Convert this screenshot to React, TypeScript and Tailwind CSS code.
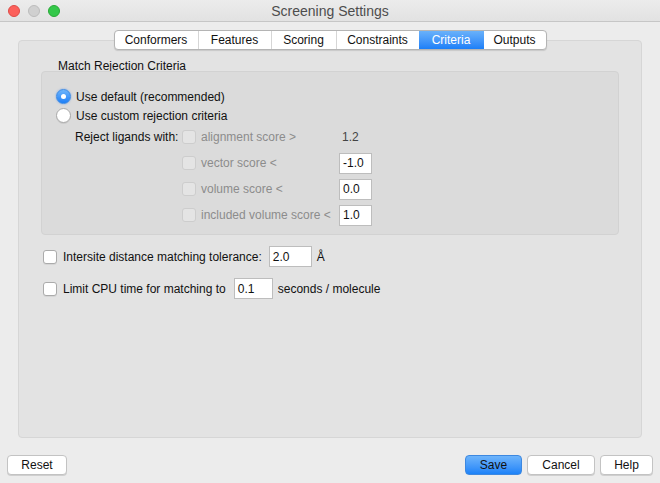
import React from 'react'

const TABS = [
  { label: 'Conformers', w: 'w-[83px]' },
  { label: 'Features', w: 'w-[73px]' },
  { label: 'Scoring', w: 'w-[65px]' },
  { label: 'Constraints', w: 'w-[83px]' },
  { label: 'Criteria', w: 'w-[65px]', active: true },
  { label: 'Outputs', w: 'w-[62px]' },
]

const CRITERIA = [
  { label: 'alignment score >', value: '1.2', plain: true },
  { label: 'vector score <', value: '-1.0' },
  { label: 'volume score <', value: '0.0' },
  { label: 'included volume score <', value: '1.0' },
]

function Radio({ on }: { on?: boolean }) {
  return on ? (
    <span className="w-[15px] h-[15px] rounded-full bg-gradient-to-b from-[#6cb4fb] to-[#1a7ff7] border border-[#3a8ae6] flex items-center justify-center shadow-[0_0_2px_rgba(40,120,240,0.6)]">
      <span className="w-[5px] h-[5px] rounded-full bg-white" />
    </span>
  ) : (
    <span className="w-[15px] h-[15px] rounded-full bg-white border border-[#a9a9a9] shadow-[0_1px_0_rgba(0,0,0,0.08)]" />
  )
}

function Check({ disabled }: { disabled?: boolean }) {
  return disabled ? (
    <span className="w-[14px] h-[14px] rounded-[3px] bg-[#e4e4e4] border border-[#cdcdcd] shrink-0" />
  ) : (
    <span className="w-[14px] h-[14px] rounded-[3px] bg-white border border-[#ababab] shadow-[0_1px_0_rgba(0,0,0,0.06)] shrink-0" />
  )
}

function Field({ value, w }: { value: string; w: string }) {
  return (
    <div className={`${w} h-[21px] bg-white border border-[#bdbdbd] flex items-center pl-[3px] text-[#111]`}>
      {value}
    </div>
  )
}

function Button({ label, w, primary }: { label: string; w: string; primary?: boolean }) {
  return (
    <div
      className={`${w} h-[20px] rounded-[4px] flex items-center justify-center text-[#111] ${
        primary
          ? 'bg-gradient-to-b from-[#6db4fb] to-[#1b82f8] border border-[#3d88e0]'
          : 'bg-white border border-[#c3c3c3] shadow-[0_1px_0_rgba(0,0,0,0.12)]'
      }`}
    >
      {label}
    </div>
  )
}

export default function App() {
  return (
    <div className="w-[660px] h-[483px] bg-[#ececec] flex flex-col overflow-hidden text-[12px] leading-none text-[#111] font-['Liberation_Sans',Arial,sans-serif]">
      {/* Title bar */}
      <div className="h-[22px] shrink-0 border-b border-[#c6c6c6] bg-gradient-to-b from-[#ececec] to-[#e2e2e2] relative flex items-center justify-center">
        <div className="absolute left-[8px] top-[5px] flex gap-[8px]">
          <span className="w-[12px] h-[12px] rounded-full bg-[#fc605b] border border-[#de4b47]" />
          <span className="w-[12px] h-[12px] rounded-full bg-[#d0d0d0] border border-[#bcbcbc]" />
          <span className="w-[12px] h-[12px] rounded-full bg-[#34c84a] border border-[#28a936]" />
        </div>
        <span className="text-[14px] text-[#4d4d4d]">Screening Settings</span>
      </div>

      {/* Tabs */}
      <div className="flex justify-center mt-[8px] relative z-10">
        <div className="flex h-[20px] bg-white border border-[#b4b4b4] rounded-[4px] shadow-[0_1px_1px_rgba(0,0,0,0.12)] overflow-hidden">
          {TABS.map((t, i) => (
            <div
              key={t.label}
              className={`${t.w} flex items-center justify-center ${
                t.active
                  ? 'bg-gradient-to-b from-[#69b1fa] to-[#1a7ff8] text-white'
                  : i > 0 && !TABS[i - 1].active
                    ? 'border-l border-[#d6d6d6]'
                    : ''
              }`}
            >
              {t.label}
            </div>
          ))}
        </div>
      </div>

      {/* Pane */}
      <div className="mx-[18px] -mt-[10px] h-[398px] shrink-0 rounded-[4px] bg-[#e3e3e3] border border-[#d6d6d6] pl-[22px] pr-[22px] pt-[19px] flex flex-col">
        <div className="ml-[17px] h-[12px] leading-[12px]">Match Rejection Criteria</div>
        <div className="-mt-[1px] h-[164px] rounded-[4px] bg-[#dbdbdb] border border-[#d2d2d2] pt-[15px] flex flex-col">
          <div className="h-[19px] flex items-center pl-[14px] gap-[5px]">
            <Radio on />
            <span>Use default (recommended)</span>
          </div>
          <div className="h-[19px] flex items-center pl-[14px] gap-[5px]">
            <Radio />
            <span>Use custom rejection criteria</span>
          </div>
          <div className="flex flex-col gap-[2px] ml-[33px]">
            {CRITERIA.map((c, i) => (
              <div key={c.label} className="h-[24px] flex items-center">
                <span className="w-[107px]">{i === 0 ? 'Reject ligands with:' : ''}</span>
                <div className="w-[157px] flex items-center gap-[5px] text-[#8c8c8c]">
                  <Check disabled />
                  <span>{c.label}</span>
                </div>
                {c.plain ? (
                  <span className="pl-[3px] text-[#444]">{c.value}</span>
                ) : (
                  <Field value={c.value} w="w-[33px]" />
                )}
              </div>
            ))}
          </div>
        </div>

        <div className="mt-[11px] ml-[2px] h-[21px] flex items-center">
          <Check />
          <span className="ml-[6px]">Intersite distance matching tolerance:</span>
          <div className="ml-[7px]">
            <Field value="2.0" w="w-[43px]" />
          </div>
          <span className="ml-[5px]">Å</span>
        </div>
        <div className="mt-[11px] ml-[2px] h-[21px] flex items-center">
          <Check />
          <span className="ml-[6px]">Limit CPU time for matching to</span>
          <div className="ml-[8px]">
            <Field value="0.1" w="w-[39px]" />
          </div>
          <span className="ml-[5px]">seconds / molecule</span>
        </div>
      </div>

      {/* Buttons */}
      <div className="mt-[17px] px-[7px] flex items-center">
        <Button label="Reset" w="w-[60px]" />
        <div className="flex-1" />
        <div className="flex gap-[5px]">
          <Button label="Save" w="w-[57px]" primary />
          <Button label="Cancel" w="w-[68px]" />
          <Button label="Help" w="w-[53px]" />
        </div>
      </div>
    </div>
  )
}
